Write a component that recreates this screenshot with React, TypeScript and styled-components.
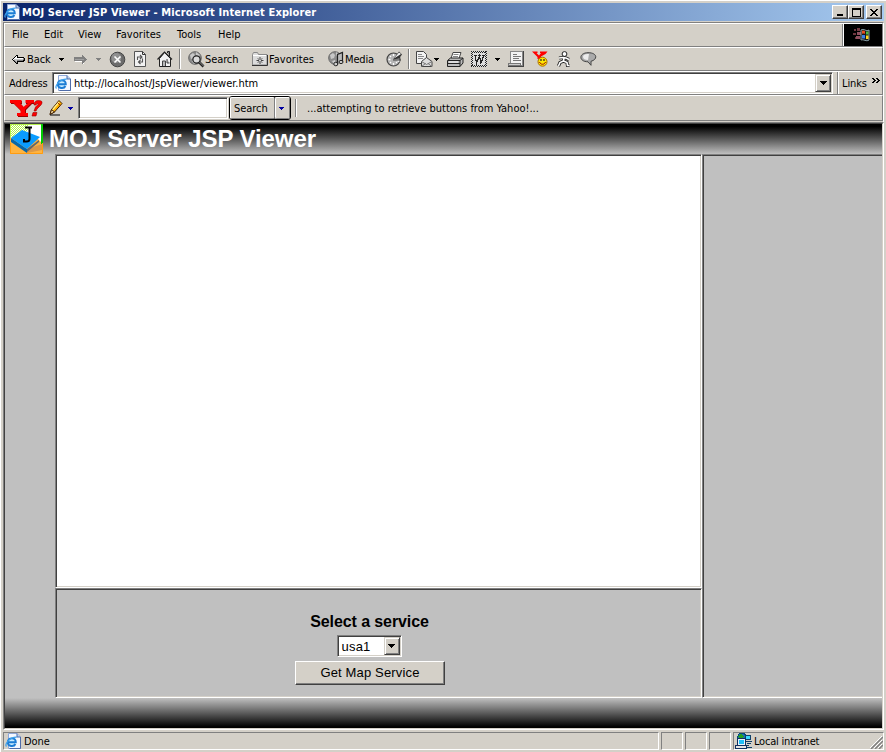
import React from "react";
import styled, { createGlobalStyle } from "styled-components";

const Global = createGlobalStyle`
  * { box-sizing: border-box; }
  body { margin: 0; overflow: hidden; }
`;

const face = "#d4d0c8";
const shade = "#808080";
const dark = "#404040";

const Window = styled.div`
  width: 886px;
  height: 752px;
  background: ${face};
  border-top: 1px solid #fff;
  border-left: 1px solid #fff;
  padding: 2px 2px 0 2px;
  display: flex;
  flex-direction: column;
  font: 11px "DejaVu Sans Condensed", "DejaVu Sans", sans-serif;
  color: #000;
  svg { flex: none; display: block; }
`;

const TitleBar = styled.header`
  height: 18px;
  flex: none;
  display: flex;
  align-items: center;
  background: linear-gradient(90deg, #0a246a, #a6caf0);
  padding: 0 2px 0 1px;
`;

const Text = styled.span<{ $w: number; $ml?: number; $ls?: number; $bold?: boolean; $color?: string }>`
  flex: none;
  width: ${(p) => p.$w}px;
  margin-left: ${(p) => p.$ml ?? 0}px;
  letter-spacing: ${(p) => p.$ls ?? 0}px;
  font-weight: ${(p) => (p.$bold ? 700 : 400)};
  color: ${(p) => p.$color ?? "#000"};
  white-space: nowrap;
  line-height: 14px;
  padding-top: 1px;
`;

const MenuItem = styled(Text)`
  padding: 0 0 1px;
`;

const Slot = styled.span<{ $w: number; $ml?: number }>`
  flex: none;
  display: flex;
  justify-content: center;
  width: ${(p) => p.$w}px;
  margin-left: ${(p) => p.$ml ?? 0}px;
`;

const Spacer = styled.div`flex: 1;`;

const WindowButton = styled.button<{ $gap?: number }>`
  flex: none;
  width: 16px;
  height: 14px;
  margin-left: ${(p) => p.$gap ?? 0}px;
  padding: 0;
  background: ${face};
  border: 1px solid;
  border-color: #fff ${dark} ${dark} #fff;
  box-shadow: inset -1px -1px ${shade};
  display: flex;
  align-items: center;
  justify-content: center;
`;

const Rebar = styled.div`
  flex: none;
  height: 101px;
  margin-top: 1px;
  border: solid;
  border-width: 1px 1px 0 1px;
  border-color: ${shade} #fff ${shade} ${shade};
`;

const Band = styled.div<{ $h: number }>`
  height: ${(p) => p.$h}px;
  display: flex;
  align-items: center;
  border: 1px solid;
  border-color: #fff ${shade} ${shade} #fff;
`;

const Throbber = styled.div`
  flex: none;
  width: 39px;
  height: 22px;
  border-left: 1px solid #fff;
  box-shadow: -1px 0 ${shade};
  background: #000;
  display: flex;
  align-items: center;
  justify-content: center;
`;

const Divider = styled.i<{ $ml: number; $h: number }>`
  flex: none;
  width: 2px;
  height: ${(p) => p.$h}px;
  margin-left: ${(p) => p.$ml}px;
  border-left: 1px solid ${shade};
  border-right: 1px solid #fff;
`;

const Sunken = styled.div<{ $w: number; $h: number; $ml?: number }>`
  flex: none;
  width: ${(p) => p.$w}px;
  height: ${(p) => p.$h}px;
  margin-left: ${(p) => p.$ml ?? 0}px;
  background: #fff;
  border: 1px solid;
  border-color: ${shade} #fff #fff ${shade};
  box-shadow: inset 1px 1px ${dark}, inset -1px -1px ${face};
  padding: 1px;
  display: flex;
  align-items: center;
`;

const DropButton = styled.button`
  flex: none;
  width: 16px;
  height: 100%;
  padding: 0;
  background: ${face};
  border: 1px solid;
  border-color: ${face} ${dark} ${dark} ${face};
  box-shadow: inset 1px 1px #fff, inset -1px -1px ${shade};
  display: flex;
  align-items: center;
  justify-content: center;
`;

const SearchGroup = styled.div`
  flex: none;
  display: flex;
  width: 62px;
  height: 24px;
  margin-left: 1px;
  border: 1px solid #000;
  border-radius: 3px;
`;

const SearchPart = styled.button<{ $w: number; $rule?: boolean }>`
  width: ${(p) => p.$w}px;
  padding: 1px 0 0 3px;
  font: inherit;
  letter-spacing: -0.05px;
  color: #000;
  text-align: left;
  background: ${face};
  border: 1px solid;
  border-color: #fff ${shade} ${shade} #fff;
  border-radius: 2px;
  box-shadow: ${(p) => (p.$rule ? "1px 0 #000" : "none")};
  display: flex;
  align-items: center;
`;

const Viewport = styled.main`
  flex: none;
  width: 881px;
  height: 608px;
  margin-top: -1px;
  border: 1px solid;
  border-color: ${shade} #fff #fff ${shade};
`;

const Client = styled.div`
  height: 606px;
  border: 1px solid;
  border-color: ${dark} ${face} ${face} ${dark};
  display: flex;
  flex-direction: column;
  background: #c0c0c0;
`;

const Banner = styled.div`
  flex: none;
  height: 30px;
  display: flex;
  align-items: center;
  background: linear-gradient(#000 8%, #c0c0c0);
  padding-left: 5px;
`;

const Heading = styled.h1`
  margin: 0 0 0 6px;
  font: bold 24px/30px "Liberation Sans", Arial, sans-serif;
  letter-spacing: -0.08px;
  color: #fff;
  white-space: nowrap;
`;

const Frames = styled.div`
  flex: none;
  height: 544px;
  display: grid;
  grid-template-columns: 50px 647px 180px;
  grid-template-rows: 434px 110px;
`;

const LeftFrame = styled.div`grid-row: 1 / 3;`;

const Frame = styled.section<{ $bg?: string }>`
  background: ${(p) => p.$bg ?? "#c0c0c0"};
  border: 1px solid;
  border-color: ${shade} #fff #fff ${shade};
  box-shadow: inset 1px 1px ${dark}, inset -1px -1px ${face};
`;

const SideFrame = styled(Frame)`
  grid-column: 3;
  grid-row: 1 / 3;
  border-right: 0;
  box-shadow: inset 1px 1px ${dark}, inset 0 -1px ${face};
`;

const ServiceFrame = styled(Frame)`
  grid-column: 2;
  display: flex;
  flex-direction: column;
  align-items: center;
  padding: 24px 17px 0 0;
  font-family: "Liberation Sans", Arial, sans-serif;
`;

const ServiceTitle = styled.label`
  font: bold 16px/18px "Liberation Sans", Arial, sans-serif;
  letter-spacing: -0.1px;
  margin: 0 1px 4px 0;
`;

const ServiceSelect = styled(Sunken)`
  margin-right: 2px;
`;

const ServiceValue = styled.span`
  flex: 1;
  padding-left: 3px;
  font-size: 13px;
  letter-spacing: 0.2px;
`;

const MapButton = styled.button`
  width: 150px;
  height: 24px;
  margin: 4px 0 0 0;
  padding: 0 0 2px;
  font: 13px "Liberation Sans", Arial, sans-serif;
  letter-spacing: 0.15px;
  color: #000;
  background: ${face};
  border: 1px solid;
  border-color: #fff ${dark} ${dark} #fff;
  box-shadow: inset -1px -1px ${shade};
`;

const Footer = styled.div`
  flex: none;
  height: 30px;
  background: linear-gradient(#c0c0c0, #000 96%);
`;

const StatusBar = styled.footer`
  flex: none;
  display: flex;
  gap: 2px;
  padding-top: 2px;
  height: 20px;
`;

const Pane = styled.div<{ $w: number }>`
  flex: none;
  width: ${(p) => p.$w}px;
  height: 18px;
  border: 1px solid;
  border-color: ${shade} #fff #fff ${shade};
  display: flex;
  align-items: center;
`;

const Grip = styled.svg`margin-left: auto; align-self: flex-end;`;

/* Draws a small bitmap: one character per pixel, looked up in the palette. */
const tones: Record<string, string> = {
  k: "#000", w: "#fff", g: "#808080", l: "#c0c0c0", m: "#a0a0a0", b: "#0000a0",
};
const Bitmap = ({ rows }: { rows: string[] }) => (
  <svg width={Math.max(...rows.map((r) => r.length))} height={rows.length} shapeRendering="crispEdges">
    {rows.flatMap((row, y) =>
      [...row].map((c, x) => (tones[c] ? <rect key={`${x}.${y}`} x={x} y={y} width="1" height="1" fill={tones[c]} /> : null))
    )}
  </svg>
);

const Caret = ({ tone = "k", big = false }: { tone?: string; big?: boolean }) => (
  <Bitmap rows={(big ? ["kkkkkkk", ".kkkkk.", "..kkk..", "...k..."] : ["kkkkk", ".kkk.", "..k.."]).map((r) => r.replace(/k/g, tone))} />
);

const PageIcon = () => (
  <svg width="16" height="16" viewBox="0 0 16 16">
    <path d="M3.500.5h8.500l3.500 3.500v11.500h-12z" fill="#f4f8ff" stroke="#8fa8d8" />
    <path d="M15.500 4v11.500h-11" fill="none" stroke="#4f6ca8" />
    <path d="M12 .5V4h3.500" fill="#bcd0ee" stroke="#4d6ca8" />
    <circle cx="6.700" cy="9" r="4" fill="#c8ecff" />
    <path d="M3 9.200h7.800c0-5-7.800-5.200-8 0 .1 4.600 6.300 4.800 7.600 1.800" fill="none" stroke="#1c7cd4" strokeWidth="1.900" />
    <path d="M1.500 13.500C-.5 11.500 4 4 11.800 4.200" fill="none" stroke="#3ca0ec" strokeWidth="1.200" />
  </svg>
);

const BackIcon = () => (
  <Bitmap rows={["....kk.......", "...kwk.......", "..kwwkkkkkkk.", ".kwwwwwwwwwgk", "kwlllllllllgk", ".kgllggggggkk", "..kglkkkkkkk.", "...kgk.......", "....kk......."]} />
);
const ForwardIcon = () => (
  <Bitmap rows={["........g....", "........gg...", "ggggggggggg..", "gggggggggggg.", "gmmmmmmmmmggg", "gggggggggggg.", ".wwwwwwwggg..", "........gg...", "........gw..."]} />
);

const StopIcon = () => (
  <svg width="17" height="17" viewBox="0 0 17 17">
    <circle cx="8.500" cy="8.500" r="7.300" fill="#6c6c6c" stroke="#444" />
    <circle cx="7.300" cy="7" r="5" fill="#909090" />
    <path d="M5.500 5.500l6 6m0-6l-6 6" stroke="#fff" strokeWidth="1.600" />
  </svg>
);
const RefreshIcon = () => (
  <svg width="14" height="16" viewBox="0 0 14 16">
    <path d="M1.500.5h8l3 3v12h-11z" fill="#f2f2f2" stroke="#555" />
    <path d="M9.500.5v3h3" fill="none" stroke="#333" />
    <path d="M4.500 9V6h4M7 4l2 2-2 2M9.500 7.500V11h-4M7.500 9l-2 2 2 2" fill="none" stroke="#555" strokeWidth="1.100" />
  </svg>
);
const HomeIcon = () => (
  <svg width="16" height="16" viewBox="0 0 16 16">
    <path d="M10.500 2V.5h2V5" fill="#888" stroke="#222" />
    <path d="M2.500 7.500v8h11v-8l-6-6z" fill="#f4f4f4" stroke="#222" />
    <path d="M.5 8.500l7-7.500 7.500 7.500" fill="none" stroke="#222" strokeWidth="1.200" />
    <path d="M5.500 15v-5h3v5M10 8v4h2.500" fill="#bbb" stroke="#444" />
  </svg>
);
const Globe = () => (
  <>
    <circle cx="7" cy="7" r="6.300" fill="#8c8c8c" stroke="#666" />
    <path d="M2 4l3-2 2 2-1 3-3 1zM8 1l4 3-2 2-2-2z" fill="#c8c8c8" />
    <path d="M4 10l3-1 1 3-2 1z" fill="#ccc" />
  </>
);
const SearchIcon = () => (
  <svg width="17" height="17" viewBox="0 0 17 17">
    <Globe />
    <circle cx="8.500" cy="8.500" r="3.600" fill="#dcdcdc" stroke="#222" strokeWidth="1.200" />
    <path d="M11 11l4.500 4.500" stroke="#222" strokeWidth="2.600" />
    <path d="M11.500 11l4 4" stroke="#aaa" strokeWidth=".8" />
  </svg>
);
const FolderIcon = () => (
  <svg width="16" height="14" viewBox="0 0 16 14">
    <path d="M.5 2.500l1-2h4l1 2h8.500v10.500H.5z" fill="#dcdcdc" stroke="#888" />
    <path d="M1 3.500h13" stroke="#fff" />
    <path d="M0 13.500h15.500V3" fill="none" stroke="#333" />
    <path d="M8 5v7M4.500 8.500h7M5.800 6.300l4.400 4.400m0-4.400l-4.400 4.400" stroke="#333" strokeWidth=".9" />
    <rect x="7.200" y="7.700" width="1.600" height="1.600" fill="#fff" />
  </svg>
);
const MediaIcon = () => (
  <svg width="17" height="16" viewBox="0 0 17 16">
    <Globe />
    <path d="M9.500 13V3.500l5-2V11" fill="#bbb" stroke="#222" strokeWidth="1.200" />
    <ellipse cx="7.800" cy="13" rx="2" ry="1.800" fill="#ccc" stroke="#222" />
    <ellipse cx="13" cy="11" rx="2" ry="1.600" fill="#ccc" stroke="#222" />
  </svg>
);
const HistoryIcon = () => (
  <svg width="17" height="16" viewBox="0 0 17 16">
    <circle cx="7.500" cy="8.500" r="6.500" fill="#b4b4b4" stroke="#444" strokeWidth="1.200" />
    <path d="M7.500 3v2M2.500 8.500h2M7.500 12v2M11.500 10h2M4 5l1 1M4 12l1-1M11 12l-1-1" stroke="#fff" strokeWidth="1.300" />
    <path d="M7 8.500L13 .5l3 3-3 4z" fill="#333" />
    <path d="M8 7.500l5-6 2 1.500z" fill="#f5f5f5" />
    <path d="M7 9h8" stroke="#444" />
  </svg>
);
const MailIcon = () => (
  <svg width="17" height="16" viewBox="0 0 17 16">
    <path d="M.5.5h7l3 3v9H.5z" fill="#f3f3f3" stroke="#444" />
    <path d="M2 3.500h4M2 5.500h6M2 7.500h5" stroke="#888" />
    <path d="M5.500 10.500l5-4 5.500 4v5H5.500z" fill="#ddd" stroke="#444" />
    <path d="M5.500 10.500l5 3 5.500-3M5.500 15.500l4-3M16 15.500l-4-3" fill="none" stroke="#777" />
  </svg>
);
const PrintIcon = () => (
  <svg width="17" height="15" viewBox="0 0 17 15">
    <path d="M4 6.500l2-6h8l-2 6z" fill="#fff" stroke="#444" />
    <path d="M6.500 2.500h5M6 4.500h5" stroke="#888" />
    <path d="M.5 8.500l3-2.500h12.500v5l-3 3.500H.5z" fill="#bbb" stroke="#222" />
    <path d="M1 8.500h12l3-2.500M13 8.500v6M1 11.500h12" fill="none" stroke="#222" />
    <path d="M2 10h9" stroke="#fff" />
  </svg>
);
const WordIcon = () => (
  <svg width="17" height="16" viewBox="0 0 17 16" shapeRendering="crispEdges">
    <rect width="16" height="16" fill="#ddd" />
    <path d="M0 .5h16M0 15.500h16M.5 0v16M15.500 0v16" stroke="#222" strokeDasharray="1 1" />
    <path d="M1 1.500h14M1 14.500h14M1.500 1v14M14.500 1v14" stroke="#222" strokeDasharray="1 1" />
    <path d="M3 4.500h3M7 4.500h3M11 4.500h3" stroke="#222" />
    <path d="M4 4l1.500 8L8.500 5l1.500 7L13 4" fill="none" stroke="#222" strokeWidth="1.300" />
  </svg>
);
const NotesIcon = () => (
  <svg width="16" height="16" viewBox="0 0 16 16" shapeRendering="crispEdges">
    <rect x="2.500" y=".5" width="12" height="14" fill="#f2f2f2" stroke="#888" />
    <path d="M15.500 0v15M0 15.500h16" stroke="#444" />
    <path d="M5 3.500h4M5 5.500h8M5 7.500h6M5 9.500h8" stroke="#777" />
    <rect x=".5" y="12.500" width="12" height="2" fill="#ccc" stroke="#777" />
  </svg>
);
const MessengerIcon = () => (
  <svg width="16" height="16" viewBox="0 0 16 16">
    <path d="M0 .5h5.500v1.500H4.500l2.500 2.500 2-2.500H8V.5h7.500L13.500 3 9 5.500v2.500H5.500V6z" fill="#f00" />
    <circle cx="10.500" cy="10.700" r="4.500" fill="#ffe800" stroke="#a86b00" />
    <path d="M9 8v2m3-2v2" stroke="#222" strokeWidth="1.200" />
    <path d="M7.500 11c1 3 5 3 6 0" fill="none" stroke="#900" />
  </svg>
);
const RunnerIcon = () => (
  <svg width="14" height="16" viewBox="0 0 14 16">
    <circle cx="7.500" cy="3" r="2.400" fill="#fff" stroke="#222" />
    <path d="M2 7l4-.5 3 .5 3 1.500M7 7l-.5 3L3 11.500 1.500 15M6.500 10l3.500 1.500.5 3h2" fill="none" stroke="#222" strokeWidth="3.200" />
    <path d="M2 7l4-.5 3 .5 3 1.500M7 7l-.5 3L3 11.500 1.500 15M6.500 10l3.500 1.500.5 3h2" fill="none" stroke="#fff" strokeWidth="1.600" />
  </svg>
);
const BalloonIcon = () => (
  <svg width="17" height="14" viewBox="0 0 17 14">
    <path d="M8 9.800C-1.500 9.800-1.500.8 8 .7s10 6.800 3 8.600v4z" fill="#aaa" stroke="#444" />
    <path d="M3 5C3 2.500 6 1.800 9 2l-1 6C5 8 3 7 3 5z" fill="#ececec" />
  </svg>
);
const YahooLogo = () => (
  <svg width="33" height="17" viewBox="0 0 33 17">
    <path d="M1 1h11v3h-1l3 3.500L18 4h-2V1h8v3h-2l-6 6v4h2v3H8v-3h3v-3L4 4H1z" fill="#900" />
    <path d="M0 0h11.500v3H10l3.500 4L18 3h-2.500V0H24v3h-2.500L15 9.500V13h3v3H7v-3h3.500v-3L3.500 3H0z" fill="#f00" />
    <path d="M24 5q0-4.500 4.500-4.500Q34 .5 31 5l-4 4-1 2h-2l1.500-4 3-3-1.500-.5L26 5zM23 12.500h4l-1 3.500h-4z" fill="#f00" stroke="#900" strokeWidth=".6" />
  </svg>
);
const PencilIcon = () => (
  <svg width="15" height="16" viewBox="0 0 15 16">
    <path d="M1 14.500l1.500-5 7.500-9 3 3-7.500 8.500z" fill="#ffb000" stroke="#402000" />
    <path d="M3.500 10L10 2" stroke="#fff08a" strokeWidth="1.300" />
    <path d="M1 14.500l1.500-5 3 2.500z" fill="#f5d8a0" stroke="#402000" />
    <path d="M8.500 2.500l3 3" stroke="#a03000" />
    <path d="M1 15h10" stroke="#222" strokeWidth="1.200" />
  </svg>
);
const JLogo = () => (
  <svg width="33" height="30" viewBox="0 0 33 30">
    <defs>
      <pattern id="dither" width="2" height="2" patternUnits="userSpaceOnUse">
        <path d="M0 0h1v1H0zM1 1h1v1H1z" fill="#b4f04c" />
      </pattern>
    </defs>
    <rect width="33" height="30" fill="#ffb440" />
    <path d="M0 0h33v20l-9-9L0 14z" fill="#fff" />
    <path d="M0 0h18v7L6 13H0z" fill="url(#dither)" />
    <path d="M.5 14V.5H32" fill="none" stroke="#b4f04c" />
    <path d="M32 0v20" stroke="#0c0" strokeWidth="2" />
    <path d="M1 14l16 11v4L1 18z" fill="#0867a8" />
    <path d="M17 25l15-5v6L17 29z" fill="#dc9848" />
    <path d="M17 25l12-9v2L17 28z" fill="#606870" />
    <path d="M1 14L12 6l18 7-13 12z" fill="#0a9cff" />
    <path d="M15 3.500h7M19.500 3v12q0 2.500-3 2.500h-2.500v-2.500" fill="none" stroke="#000" strokeWidth="2" />
    <path d="M.5 19v10.500h32V19" fill="none" stroke="#ff9c10" />
  </svg>
);
const FlagIcon = () => (
  <svg width="22" height="18" viewBox="0 0 22 18">
    <path d="M2 3h2v2H2zM1 7h3v2H1zM3 11h3v2H3zM5 2h3v3H5z" fill="#703840" />
    <path d="M5 6h4v3H5zM4 10h4v3H4z" fill="#905060" />
    <path d="M9 4c3-2 5 2 8 0v10c-3 2-5-1-8 0z" fill="#171717" stroke="#88a0a8" />
    <path d="M10 5c1.500-1 2 0 3 .3V8c-1.500-.6-2-.4-3 0z" fill="#e85020" />
    <path d="M14 5.500h2.500v3H14z" fill="#48b840" />
    <path d="M10 9h3v3.500h-3z" fill="#3880e8" />
    <path d="M14 9.500h2.500V13H14z" fill="#ffd820" />
  </svg>
);
const IntranetIcon = () => (
  <svg width="17" height="16" viewBox="0 0 17 16" shapeRendering="crispEdges">
    <path d="M2 5l2-4 5-1 2 3-1 4-6 1z" fill="#1870b8" stroke="#064878" />
    <path d="M3 3l3-2 3 2-2 2H4z" fill="#28a020" />
    <rect x="10.500" y="2.500" width="5" height="4" fill="#38d8ff" stroke="#104068" />
    <path d="M10 8.500h7M12 10.500h4M11 12.500h3M12 14.500h5" stroke="#104068" />
    <rect x="2.500" y="5.500" width="8" height="7" fill="#e8f4ff" stroke="#103060" />
    <rect x="4" y="7" width="5" height="4" fill="#20c0f8" />
    <rect x=".5" y="12.500" width="11" height="3" fill="#e4e4e4" stroke="#103060" />
  </svg>
);

const App = () => (
  <>
    <Global />
    <Window>
      <TitleBar>
        <PageIcon />
        <Text $w={400} $ml={2} $ls={0.12} $bold $color="#fff">MOJ Server JSP Viewer - Microsoft Internet Explorer</Text>
        <Spacer />
        <WindowButton><Bitmap rows={[".......", ".......", ".......", ".......", ".......", "kkkkkk.", "kkkkkk."]} /></WindowButton>
        <WindowButton><Bitmap rows={["kkkkkkkkk", "kkkkkkkkk", "k.......k", "k.......k", "k.......k", "k.......k", "k.......k", "k.......k", "kkkkkkkkk"]} /></WindowButton>
        <WindowButton $gap={2}><Bitmap rows={["kk....kk", ".kk..kk.", "..kkkk..", "...kk...", "..kkkk..", ".kk..kk.", "kk....kk"]} /></WindowButton>
      </TitleBar>

      <Rebar>
        <Band as="nav" $h={24}>
          <MenuItem $w={32} $ml={7}>File</MenuItem>
          <MenuItem $w={34}>Edit</MenuItem>
          <MenuItem $w={38}>View</MenuItem>
          <MenuItem $w={61} $ls={0.05}>Favorites</MenuItem>
          <MenuItem $w={41}>Tools</MenuItem>
          <MenuItem $w={40}>Help</MenuItem>
          <Spacer />
          <Throbber><FlagIcon /></Throbber>
        </Band>

        <Band $h={24}>
          <Slot $w={13} $ml={7}><BackIcon /></Slot>
          <Text $w={24} $ml={2} $ls={-0.1}>Back</Text>
          <Slot $w={5} $ml={8}><Caret /></Slot>
          <Slot $w={13} $ml={10}><ForwardIcon /></Slot>
          <Slot $w={5} $ml={9}><Caret tone="g" /></Slot>
          <Slot $w={17} $ml={8}><StopIcon /></Slot>
          <Slot $w={14} $ml={7}><RefreshIcon /></Slot>
          <Slot $w={16} $ml={10}><HomeIcon /></Slot>
          <Divider $ml={6} $h={20} />
          <Slot $w={17} $ml={7}><SearchIcon /></Slot>
          <Text $w={34} $ls={-0.1}>Search</Text>
          <Slot $w={16} $ml={13}><FolderIcon /></Slot>
          <Text $w={46} $ml={1} $ls={0.05}>Favorites</Text>
          <Slot $w={17} $ml={13}><MediaIcon /></Slot>
          <Text $w={29} $ls={-0.15}>Media</Text>
          <Slot $w={17} $ml={12}><HistoryIcon /></Slot>
          <Divider $ml={5} $h={20} />
          <Slot $w={17} $ml={6}><MailIcon /></Slot>
          <Slot $w={5} $ml={1}><Caret /></Slot>
          <Slot $w={17} $ml={8}><PrintIcon /></Slot>
          <Slot $w={17} $ml={7}><WordIcon /></Slot>
          <Slot $w={5} $ml={7}><Caret /></Slot>
          <Slot $w={16} $ml={8}><NotesIcon /></Slot>
          <Slot $w={16} $ml={8}><MessengerIcon /></Slot>
          <Slot $w={14} $ml={9}><RunnerIcon /></Slot>
          <Slot $w={17} $ml={9}><BalloonIcon /></Slot>
        </Band>

        <Band $h={24}>
          <Text $w={43} $ml={4} $ls={-0.1}>Address</Text>
          <Sunken $w={781} $h={22}>
            <Slot $w={16} $ml={1}><PageIcon /></Slot>
            <Text $w={400} $ml={3}>http://localhost/JspViewer/viewer.htm</Text>
            <Spacer />
            <DropButton><Caret big /></DropButton>
          </Sunken>
          <Divider $ml={4} $h={22} />
          <Text $w={25} $ml={3} $ls={-0.1}>Links</Text>
          <Slot $w={9} $ml={4}>
            <Bitmap rows={["kk..kk..", ".kk..kk.", "..kk..kk", ".kk..kk.", "kk..kk..", "........", "........", "........", "........", "........", "........"]} />
          </Slot>
        </Band>

        <Band $h={26}>
          <Slot $w={33} $ml={5}><YahooLogo /></Slot>
          <Slot $w={15} $ml={6}><PencilIcon /></Slot>
          <Slot $w={5} $ml={4}><Caret tone="b" /></Slot>
          <Sunken $w={150} $h={22} $ml={5} />
          <SearchGroup>
            <SearchPart $w={45} $rule>Search</SearchPart>
            <SearchPart $w={15}><Caret tone="b" /></SearchPart>
          </SearchGroup>
          <Divider $ml={4} $h={18} />
          <Text $w={300} $ml={10}>...attempting to retrieve buttons from Yahoo!...</Text>
        </Band>
      </Rebar>

      <Viewport>
        <Client>
          <Banner><JLogo /><Heading>MOJ Server JSP Viewer</Heading></Banner>
          <Frames>
            <LeftFrame />
            <Frame $bg="#fff" />
            <SideFrame />
            <ServiceFrame>
              <ServiceTitle>Select a service</ServiceTitle>
              <ServiceSelect $w={65} $h={22}>
                <ServiceValue>usa1</ServiceValue>
                <DropButton><Caret big /></DropButton>
              </ServiceSelect>
              <MapButton>Get Map Service</MapButton>
            </ServiceFrame>
          </Frames>
          <Footer />
        </Client>
      </Viewport>

      <StatusBar>
        <Pane $w={656}>
          <Slot $w={16} $ml={1}><PageIcon /></Slot>
          <Text $w={60} $ml={3} $ls={-0.1}>Done</Text>
        </Pane>
        <Pane $w={22} />
        <Pane $w={22} />
        <Pane $w={22} />
        <Pane $w={151}>
          <Slot $w={17} $ml={1}><IntranetIcon /></Slot>
          <Text $w={70} $ml={2} $ls={-0.2}>Local intranet</Text>
          <Grip width="13" height="13" viewBox="0 0 13 13">
            <path d="M1 13L13 1M5 13l8-8M9 13l4-4" stroke="#808080" strokeWidth="1.500" />
            <path d="M0 12L12 0M4 12l8-8M8 12l4-4" stroke="#fff" />
          </Grip>
        </Pane>
      </StatusBar>
    </Window>
  </>
);

export default App;
